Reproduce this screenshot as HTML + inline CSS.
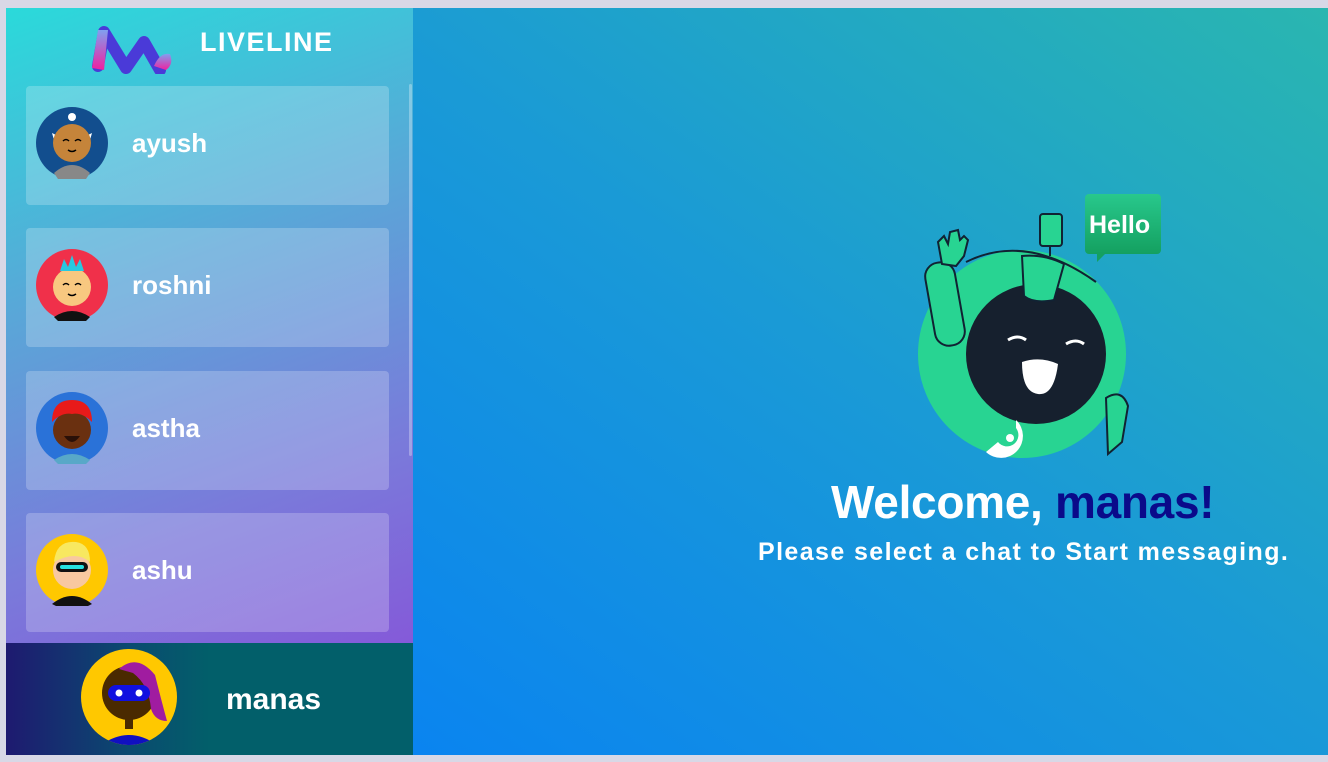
<!DOCTYPE html>
<html><head><meta charset="utf-8"><style>
*{margin:0;padding:0;box-sizing:border-box}
body{width:1328px;height:762px;background:#d8d8e6;font-family:"Liberation Sans",sans-serif;overflow:hidden;position:relative}
#side{position:absolute;left:6px;top:8px;width:407px;height:747px;background:linear-gradient(160deg,#2adada 0%,#5aa6d8 35%,#7a7ada 65%,#8a48d8 100%);overflow:hidden}
#main{position:absolute;left:413px;top:8px;width:915px;height:747px;background:linear-gradient(35deg,#0a84f0 0%,#1a9ad6 50%,#2ab6b0 100%)}
.card{position:absolute;left:20px;width:363px;height:119px;background:rgba(255,255,255,0.22);border-radius:4px}
.card .name{position:absolute;left:106px;top:42px;color:#fff;font-weight:bold;font-size:26px}
.card svg{position:absolute;left:10px;top:21px}
#foot{position:absolute;left:0;top:635px;width:407px;height:112px;background:linear-gradient(90deg,#1e1a70 0%,#0a4a70 30%,#025f6a 50%,#025f6a 100%)}
.t{position:absolute;color:#fff;font-weight:bold;white-space:nowrap}
</style></head><body>
<div id="side">
 <svg style="position:absolute;left:80px;top:12px" width="90" height="54" viewBox="0 0 90 54">
  <defs><linearGradient id="lg" x1="0" y1="1" x2="0" y2="0"><stop offset="0" stop-color="#f020a0"/><stop offset="1" stop-color="#80a0f0"/></linearGradient></defs>
  <polyline points="12,46 18,12 40,48 58,22 74,50" fill="none" stroke="#4a3ad8" stroke-width="12" stroke-linejoin="round" stroke-linecap="round"/>
  <path d="M6 48 L12 10 L22 10 L18 50 Z" fill="url(#lg)"/>
  <path d="M68 46 Q74 32 84 34 Q88 44 80 50 Z" fill="url(#lg)"/>
 </svg>
 <div class="t" style="left:194px;top:19px;font-size:27px;letter-spacing:1.5px">LIVELINE</div>
 <div style="position:absolute;left:403px;top:76px;width:3px;height:372px;background:rgba(255,255,255,0.3);border-radius:2px"></div>

 <div class="card" style="top:78px"><svg width="72" height="72" viewBox="0 0 72 72"><circle cx="36" cy="36" r="36" fill="#124e8e"/><path d="M18 66 Q36 50 54 66 L50 72 L22 72Z" fill="#888"/><path d="M16 26 L20 40 L24 30Z M56 26 L52 40 L48 30Z" fill="#fff"/><circle cx="36" cy="36" r="19" fill="#c5843a"/><circle cx="36" cy="10" r="4" fill="#fff"/><path d="M27 34 q3-3 6 0 M39 34 q3-3 6 0" stroke="#000" stroke-width="1.5" fill="none"/><path d="M32 43 q4 3 8 0" stroke="#000" stroke-width="1.5" fill="none"/></svg><div class="name">ayush</div></div>
 <div class="card" style="top:220px"><svg width="72" height="72" viewBox="0 0 72 72"><circle cx="36" cy="36" r="36" fill="#f0304a"/><path d="M18 68 Q36 56 54 68 L50 72 L22 72Z" fill="#111"/><circle cx="36" cy="38" r="19" fill="#f8c880"/><path d="M24 22 L28 10 L32 18 L36 6 L40 18 L44 10 L48 22Z" fill="#28c8e0"/><path d="M27 36 q3-3 6 0 M39 36 q3-3 6 0" stroke="#000" stroke-width="1.5" fill="none"/><path d="M32 45 q4 3 8 0" stroke="#000" stroke-width="1.5" fill="none"/></svg><div class="name">roshni</div></div>
 <div class="card" style="top:363px"><svg width="72" height="72" viewBox="0 0 72 72"><circle cx="36" cy="36" r="36" fill="#2a72d8"/><path d="M18 68 Q36 56 54 68 L50 72 L22 72Z" fill="#58a8c8"/><circle cx="36" cy="38" r="19" fill="#6a3010"/><path d="M16 30 Q16 8 36 8 Q56 8 56 30 Q46 20 36 22 Q26 20 16 30Z" fill="#e81a1a"/><path d="M28 44 Q36 56 44 44 Z" fill="#2a1008"/></svg><div class="name">astha</div></div>
 <div class="card" style="top:505px"><svg width="72" height="72" viewBox="0 0 72 72"><circle cx="36" cy="36" r="36" fill="#ffc800"/><path d="M16 70 Q36 54 56 70 L52 72 L20 72Z" fill="#111"/><circle cx="36" cy="36" r="19" fill="#f8c8a0"/><path d="M18 28 Q20 6 40 8 Q54 10 54 28 Q40 16 18 28Z" fill="#f8e860"/><rect x="20" y="28" width="32" height="10" rx="5" fill="#111"/><rect x="24" y="31" width="24" height="4" rx="2" fill="#28e0e0"/></svg><div class="name">ashu</div></div>

 <div id="foot">
  <svg style="position:absolute;left:75px;top:6px" width="96" height="96" viewBox="0 0 96 96"><circle cx="48" cy="48" r="48" fill="#ffc800"/><clipPath id="c"><circle cx="48" cy="48" r="48"/></clipPath><g clip-path="url(#c)"><path d="M20 96 Q48 76 76 96Z" fill="#1010c0"/><rect x="44" y="70" width="8" height="10" fill="#4a2a00"/><circle cx="48" cy="44" r="27" fill="#4a2a00"/><path d="M38 20 Q56 4 74 26 Q80 50 86 72 Q74 72 70 60 Q68 36 52 24Z" fill="#a01ca0"/><rect x="27" y="36" width="42" height="16" rx="8" fill="#1010e0"/><circle cx="38" cy="44" r="3.5" fill="#fff"/><circle cx="58" cy="44" r="3.5" fill="#fff"/></g></svg>
  <div class="t" style="left:220px;top:40px;font-size:30px">manas</div>
 </div>
</div>
<div id="main">
 <svg style="position:absolute;left:503px;top:184px" width="250" height="272" viewBox="0 0 250 272">
  <circle cx="106" cy="162" r="104" fill="#28d492"/>
  <rect x="14" y="70" width="30" height="84" rx="14" fill="#28d492" stroke="#123" stroke-width="2" transform="rotate(-10 29 112)"/>
  <path d="M26 72 L22 50 L28 44 L32 52 L34 40 L42 38 L44 48 L48 44 L52 48 L48 64 L40 74Z" fill="#28d492" stroke="#123" stroke-width="2"/>
  <path d="M50 70 Q110 40 180 90" fill="none" stroke="#123" stroke-width="2"/>
  <rect x="124" y="22" width="22" height="32" rx="3" fill="#28d492" stroke="#123" stroke-width="2"/>
  <line x1="134" y1="54" x2="134" y2="64" stroke="#123" stroke-width="2"/>
  <circle cx="120" cy="162" r="70" fill="#16202e"/>
  <path d="M106 64 L108 104 Q118 112 138 108 L148 72 Q128 62 106 64Z" fill="#28d492" stroke="#123" stroke-width="2"/>
  <path d="M92 148 q10-6 18 0 M150 152 q10-6 18 0" stroke="#fff" stroke-width="3" fill="none"/>
  <path d="M106 170 Q124 164 142 172 Q138 204 122 202 Q106 200 106 170Z" fill="#fff"/>
  <path d="M190 206 Q206 196 212 214 L206 250 L192 262 Z" fill="#28d492" stroke="#123" stroke-width="2"/>
  <path d="M100 228 A20 20 0 1 1 70 260 L82 250 A8 8 0 1 0 100 236Z" fill="#fff"/>
  <circle cx="94" cy="246" r="4" fill="#fff"/>
 </svg>
 <div style="position:absolute;left:672px;top:186px;width:76px;height:60px;background:linear-gradient(#28c88c,#14a060);border-radius:4px"></div>
 <div style="position:absolute;left:684px;top:244px;width:0;height:0;border-left:10px solid #14a060;border-bottom:10px solid transparent"></div>
 <div class="t" style="left:676px;top:203px;font-size:25px">Hello</div>
 <div class="t" style="left:418px;top:467px;font-size:46px;letter-spacing:-0.3px">Welcome, <span style="color:#0a0a8a">manas!</span></div>
 <div class="t" style="left:345px;top:530px;font-size:25px;letter-spacing:1.4px">Please select a chat to Start messaging.</div>
</div>
</body></html>
